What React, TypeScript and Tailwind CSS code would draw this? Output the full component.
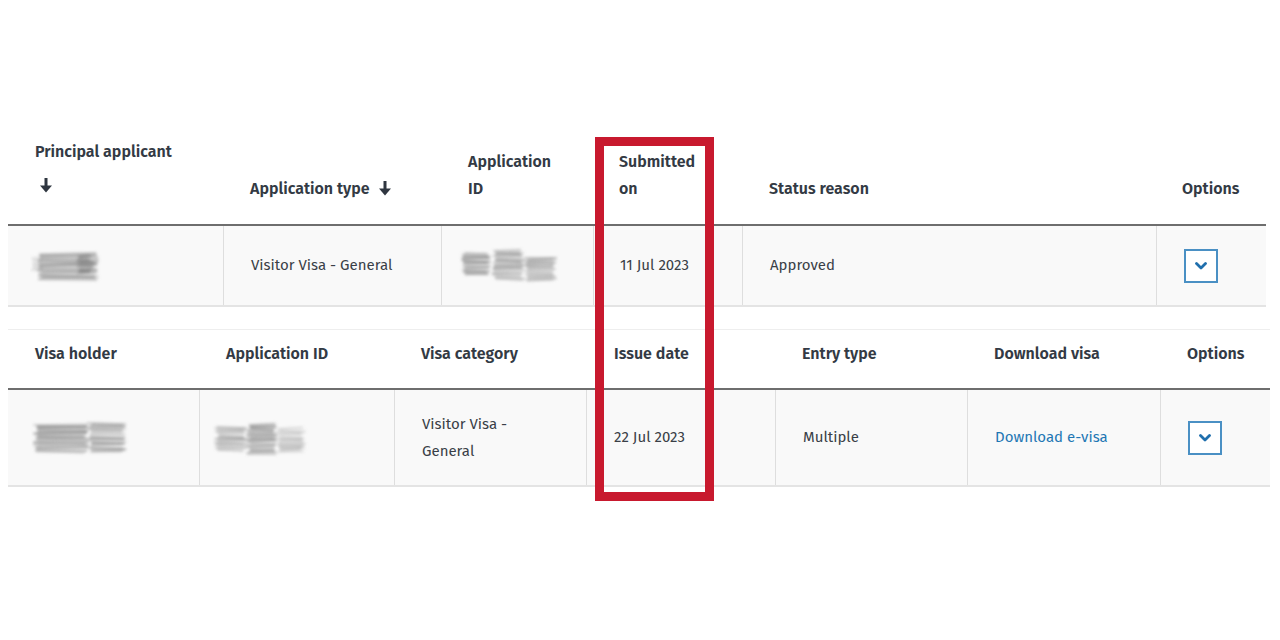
import React from 'react';

const font = { fontFamily: '"Fira Sans", Lato, "Noto Sans", sans-serif' };

const SortArrow = () => (
  <svg width="12" height="15" viewBox="0 0 12 15" className="inline-block" aria-hidden>
    <rect x="4.5" y="0" width="3" height="9" fill="#2f3640" />
    <path d="M0 7.5 L12 7.5 L6 14.5 Z" fill="#2f3640" />
  </svg>
);

const OptionsButton = () => (
  <button className="w-[34px] h-[34px] border-2 border-[#4a90c4] bg-white flex items-center justify-center">
    <svg width="12" height="8" viewBox="0 0 12 8" aria-hidden>
      <path d="M1.5 1.5 L6 6 L10.5 1.5" fill="none" stroke="#1f6fad" strokeWidth="2.8" strokeLinecap="round" strokeLinejoin="round" />
    </svg>
  </button>
);

type Chunk = { x: number; y: number; w: number; h: number; o: number };

// pencil scribble over personal data
const Scribble = ({ w, h, chunks, seed }: { w: number; h: number; chunks: Chunk[]; seed: number }) => {
  let s = seed;
  const rnd = () => {
    s = (s * 9301 + 49297) % 233280;
    return s / 233280;
  };
  const lines: React.ReactNode[] = [];
  chunks.forEach((c, ci) => {
    for (let y = c.y; y < c.y + c.h; y += 1.2) {
      const x0 = c.x + rnd() * 5;
      const x1 = c.x + c.w - rnd() * 5;
      const dy = (rnd() - 0.5) * 3;
      lines.push(
        <line
          key={`${ci}-${y}`}
          x1={x0}
          y1={y}
          x2={x1}
          y2={y + dy}
          stroke="#7a7a7a"
          strokeWidth={1.5}
          opacity={c.o * (0.3 + rnd() * 0.5)}
        />
      );
    }
  });
  return (
    <svg width={w} height={h} viewBox={`0 0 ${w} ${h}`} aria-hidden>
      <defs>
        <filter id={`soft${seed}`} x="-10%" y="-20%" width="120%" height="140%">
          <feGaussianBlur stdDeviation="1.4" />
        </filter>
      </defs>
      <g filter={`url(#soft${seed})`}>{lines}</g>
    </svg>
  );
};

const HeadCell = ({ children, className = '' }: { children: React.ReactNode; className?: string }) => (
  <div className={`pl-[27px] pr-4 text-[16px] leading-[27px] font-semibold text-[#333a44] ${className}`}>{children}</div>
);

const Cell = ({ children, first = false }: { children: React.ReactNode; first?: boolean }) => (
  <div className={`flex items-center pl-[27px] pr-4 text-[15px] leading-[27px] text-[#3a3f47] ${first ? '' : 'border-l border-[#dedede]'}`}>
    {children}
  </div>
);

export default function App() {
  return (
    <div className="relative w-[1280px] h-[640px] bg-white" style={font}>
      <div className="pt-[138px] pl-2 flex flex-col">
        {/* Applications */}
        <div className="w-[1258px]">
          <div className="grid grid-cols-[215px_218px_152px_149px_414px_110px] items-end border-b-2 border-[#6e6e6e] [&>div]:pb-[22px]">
            <HeadCell>
              <div>Principal applicant</div>
              <div className="h-[37px] flex items-center pt-[3px] pl-[5px]"><SortArrow /></div>
            </HeadCell>
            <HeadCell>
              <span className="inline-flex items-center gap-[9px]">Application type <SortArrow /></span>
            </HeadCell>
            <HeadCell>Application<br />ID</HeadCell>
            <HeadCell className="!pl-[26px]">Submitted<br />on</HeadCell>
            <HeadCell>Status reason</HeadCell>
            <HeadCell className="!pl-[26px]">Options</HeadCell>
          </div>
          <div className="grid grid-cols-[215px_218px_152px_149px_414px_110px] h-[81px] bg-[#f9f9f9] border-b-2 border-[#e4e4e4]">
            <Cell first>
              <div className="-ml-[5px]">
                <Scribble w={80} h={44} seed={7} chunks={[
                  { x: 7, y: 10, w: 62, h: 26, o: 0.85 },
                  { x: 46, y: 12, w: 18, h: 18, o: 1 },
                  { x: 0, y: 14, w: 14, h: 12, o: 0.25 },
                ]} />
              </div>
            </Cell>
            <Cell>Visitor Visa - General</Cell>
            <Cell>
              <div className="-ml-[12px]">
                <Scribble w={104} h={44} seed={13} chunks={[
                  { x: 4, y: 9, w: 30, h: 22, o: 0.9 },
                  { x: 34, y: 7, w: 34, h: 28, o: 0.85 },
                  { x: 66, y: 14, w: 34, h: 23, o: 0.8 },
                ]} />
              </div>
            </Cell>
            <Cell><span className="-ml-px">11 Jul 2023</span></Cell>
            <Cell>Approved</Cell>
            <Cell><OptionsButton /></Cell>
          </div>
        </div>

        {/* Visas */}
        <div className="w-[1262px] mt-[22px] border-t border-[#eeeeee]">
          <div className="grid grid-cols-[191px_195px_192px_189px_192px_193px_110px] items-end pt-[10px] border-b-2 border-[#6e6e6e] [&>div]:pb-[21px]">
            <HeadCell>Visa holder</HeadCell>
            <HeadCell>Application ID</HeadCell>
            <HeadCell>Visa category</HeadCell>
            <HeadCell className="!pl-[28px]">Issue date</HeadCell>
            <HeadCell>Entry type</HeadCell>
            <HeadCell>Download visa</HeadCell>
            <HeadCell>Options</HeadCell>
          </div>
          <div className="grid grid-cols-[191px_195px_192px_189px_192px_193px_110px] h-[97px] bg-[#f9f9f9] border-b-2 border-[#e4e4e4]">
            <Cell first>
              <div className="-ml-[4px]">
                <Scribble w={100} h={44} seed={21} chunks={[
                  { x: 2, y: 9, w: 56, h: 27, o: 0.9 },
                  { x: 56, y: 7, w: 40, h: 29, o: 0.85 },
                ]} />
              </div>
            </Cell>
            <Cell>
              <div className="-ml-[15px]">
                <Scribble w={112} h={46} seed={33} chunks={[
                  { x: 2, y: 12, w: 34, h: 23, o: 0.7 },
                  { x: 34, y: 10, w: 32, h: 29, o: 0.9 },
                  { x: 64, y: 14, w: 30, h: 23, o: 0.5 },
                ]} />
              </div>
            </Cell>
            <Cell><span>Visitor Visa -<br />General</span></Cell>
            <Cell>22 Jul 2023</Cell>
            <Cell>Multiple</Cell>
            <Cell><a className="text-[#1f77b4]" href="#">Download e-visa</a></Cell>
            <Cell><OptionsButton /></Cell>
          </div>
        </div>
      </div>

      {/* highlight box */}
      <div className="absolute left-[595px] top-[137px] w-[119px] h-[364px] border-[9px] border-[#c8192e]" />
    </div>
  );
}
